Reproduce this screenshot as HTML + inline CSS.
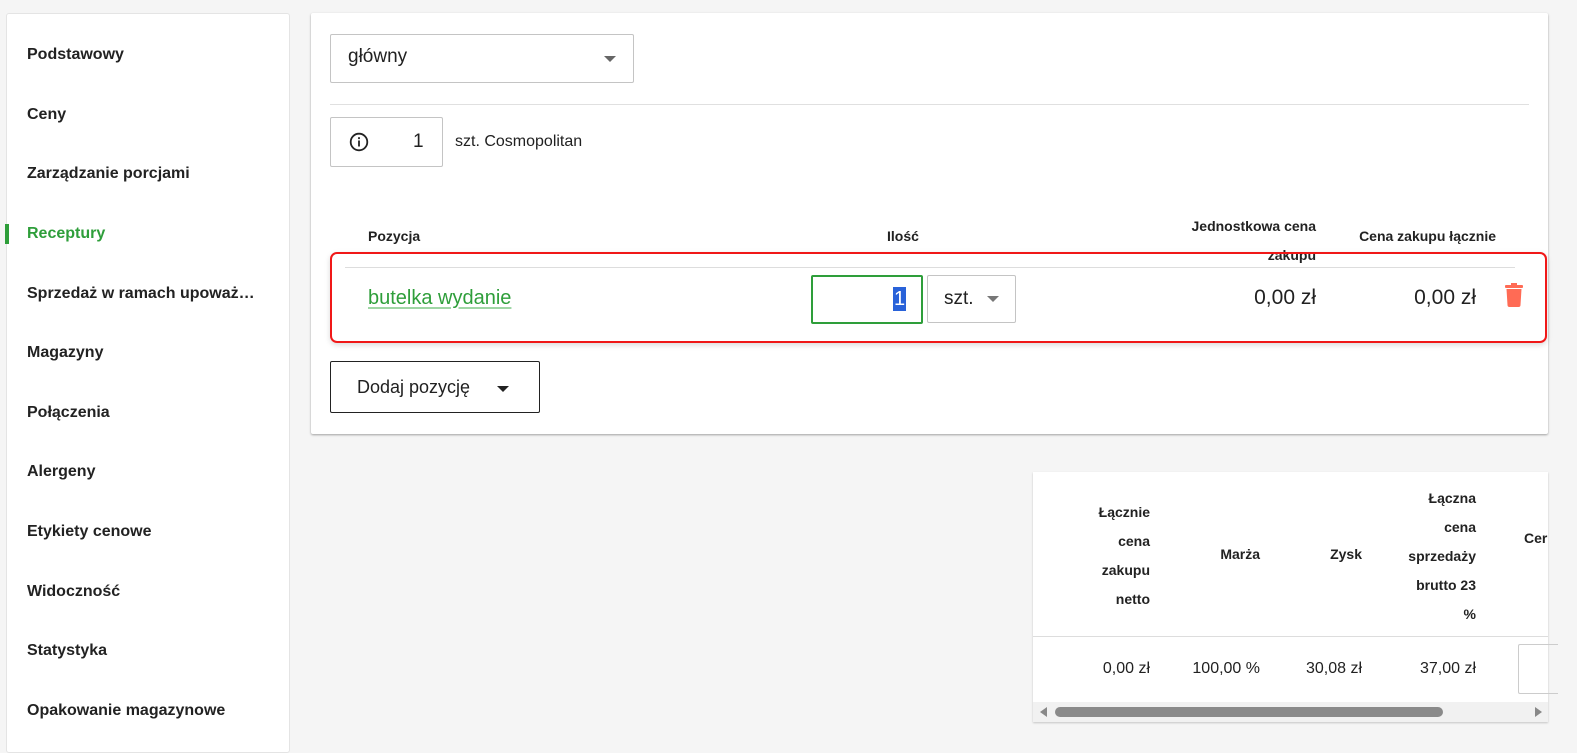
<!DOCTYPE html>
<html><head><meta charset="utf-8"><style>
*{box-sizing:border-box;margin:0;padding:0}
body{width:1577px;height:741px;background:#f5f5f5;font-family:"Liberation Sans",sans-serif;color:#212121;position:relative;overflow:hidden}
.abs{position:absolute}
.side{left:6px;top:13px;width:284px;height:740px;background:#fff;border:1px solid #e4e4e4;border-radius:3px}
.side div{position:absolute;left:20px;font-size:16px;font-weight:bold;color:#222}
.card{left:311px;top:13px;width:1237px;height:421px;background:#fff;box-shadow:0 1px 2px rgba(0,0,0,.35);border-radius:2px}
.box{border:1px solid #c4c4c4;border-radius:2px;background:#fff}
.tri{width:0;height:0;border-left:6px solid transparent;border-right:6px solid transparent;border-top:6px solid #666}
.h{font-size:14px;font-weight:bold;color:#222}
</style></head><body>
<div class="abs side">
<div style="top:32px">Podstawowy</div>
<div style="top:92px">Ceny</div>
<div style="top:151px">Zarządzanie porcjami</div>
<div style="top:211px;color:#2e9e3a">Receptury</div>
<div style="top:271px">Sprzedaż w ramach upoważ…</div>
<div style="top:330px">Magazyny</div>
<div style="top:390px">Połączenia</div>
<div style="top:449px">Alergeny</div>
<div style="top:509px">Etykiety cenowe</div>
<div style="top:569px">Widoczność</div>
<div style="top:628px">Statystyka</div>
<div style="top:688px">Opakowanie magazynowe</div>
</div>
<div class="abs" style="left:5px;top:224px;width:4px;height:20px;background:#2e9e3a"></div>

<div class="abs card"></div>
<div class="abs box" style="left:330px;top:34px;width:304px;height:49px"></div>
<div class="abs" style="left:348px;top:46px;font-size:19px">główny</div>
<div class="abs tri" style="left:604px;top:56px"></div>
<div class="abs" style="left:330px;top:104px;width:1199px;height:1px;background:#e0e0e0"></div>
<div class="abs box" style="left:330px;top:117px;width:113px;height:50px"></div>
<svg class="abs" style="left:349px;top:132px" width="20" height="20" viewBox="0 0 20 20"><circle cx="10" cy="10" r="8.3" fill="none" stroke="#222" stroke-width="1.8"/><rect x="9.1" y="8.5" width="1.8" height="6" fill="#222"/><rect x="9.1" y="5.2" width="1.8" height="1.9" fill="#222"/></svg>
<div class="abs" style="left:413px;top:131px;font-size:19px">1</div>
<div class="abs" style="left:455px;top:133px;font-size:16px">szt. Cosmopolitan</div>

<div class="abs h" style="left:368px;top:228px">Pozycja</div>
<div class="abs h" style="left:887px;top:228px">Ilość</div>
<div class="abs h" style="left:1150px;top:212px;width:166px;text-align:right;line-height:29px">Jednostkowa cena<br>zakupu</div>
<div class="abs h" style="left:1320px;top:228px;width:176px;text-align:right">Cena zakupu łącznie</div>

<div class="abs" style="left:330px;top:252px;width:1217px;height:91px;border:2px solid #f01818;border-radius:7px;box-shadow:0 2px 6px rgba(0,0,0,.15)"></div>
<div class="abs" style="left:345px;top:267px;width:1170px;height:1px;background:#ddd"></div>
<div class="abs" style="left:368px;top:287px;font-size:20px;color:#2e9e3a;text-decoration:underline;text-decoration-color:#9fd6a5;text-underline-offset:3px">butelka wydanie</div>
<div class="abs" style="left:811px;top:275px;width:112px;height:49px;border:2px solid #2e9e3a;border-radius:2px"></div>
<div class="abs" style="left:893px;top:287px;width:13px;height:24px;background:#2962d9;color:#fff;font-size:20px;text-align:center;line-height:24px">1</div>
<div class="abs box" style="left:927px;top:275px;width:89px;height:48px"></div>
<div class="abs" style="left:944px;top:288px;font-size:19px">szt.</div>
<div class="abs tri" style="left:987px;top:296px;border-top-color:#777"></div>
<div class="abs" style="left:1180px;top:286px;width:136px;text-align:right;font-size:21px">0,00 zł</div>
<div class="abs" style="left:1340px;top:286px;width:136px;text-align:right;font-size:21px">0,00 zł</div>
<svg class="abs" style="left:1504px;top:283px" width="20" height="24" viewBox="0 0 20 24"><rect x="1" y="2" width="18" height="3" rx="1" fill="#ff6b55"/><rect x="7" y="0" width="6" height="3" fill="#ff6b55"/><path d="M2.5 6h15l-1 16a2 2 0 0 1-2 2h-9a2 2 0 0 1-2-2z" fill="#ff6b55"/></svg>

<div class="abs" style="left:330px;top:361px;width:210px;height:52px;border:1px solid #222;border-radius:2px"></div>
<div class="abs" style="left:357px;top:377px;font-size:18px">Dodaj pozycję</div>
<div class="abs tri" style="left:497px;top:386px;border-top-color:#222;border-width:6px 6px 0"></div>

<div class="abs" style="left:1033px;top:472px;width:515px;height:250px;background:#fff;box-shadow:0 1px 2px rgba(0,0,0,.2)"></div>
<div class="abs h" style="left:1050px;top:498px;width:100px;text-align:right;line-height:29px">Łącznie<br>cena<br>zakupu<br>netto</div>
<div class="abs h" style="left:1180px;top:546px;width:80px;text-align:right">Marża</div>
<div class="abs h" style="left:1300px;top:546px;width:62px;text-align:right">Zysk</div>
<div class="abs h" style="left:1370px;top:484px;width:106px;text-align:right;line-height:29px">Łączna<br>cena<br>sprzedaży<br>brutto 23<br>%</div>
<div class="abs h" style="left:1524px;top:530px">Cer</div>
<div class="abs" style="left:1033px;top:636px;width:515px;height:1px;background:#ddd"></div>
<div class="abs" style="left:1050px;top:660px;width:100px;text-align:right;font-size:16px">0,00 zł</div>
<div class="abs" style="left:1160px;top:660px;width:100px;text-align:right;font-size:16px">100,00 %</div>
<div class="abs" style="left:1262px;top:660px;width:100px;text-align:right;font-size:16px">30,08 zł</div>
<div class="abs" style="left:1376px;top:660px;width:100px;text-align:right;font-size:16px">37,00 zł</div>
<div class="abs" style="left:1518px;top:644px;width:40px;height:50px;border:1px solid #ccc;border-right:none;border-radius:2px 0 0 2px"></div>
<div class="abs" style="left:1033px;top:702px;width:515px;height:20px;background:#f1f1f1"></div>
<div class="abs" style="left:1040px;top:707px;width:0;height:0;border-top:5px solid transparent;border-bottom:5px solid transparent;border-right:7px solid #888"></div>
<div class="abs" style="left:1535px;top:707px;width:0;height:0;border-top:5px solid transparent;border-bottom:5px solid transparent;border-left:7px solid #888"></div>
<div class="abs" style="left:1055px;top:707px;width:388px;height:10px;border-radius:5px;background:#8a8a8a"></div>
</body></html>
